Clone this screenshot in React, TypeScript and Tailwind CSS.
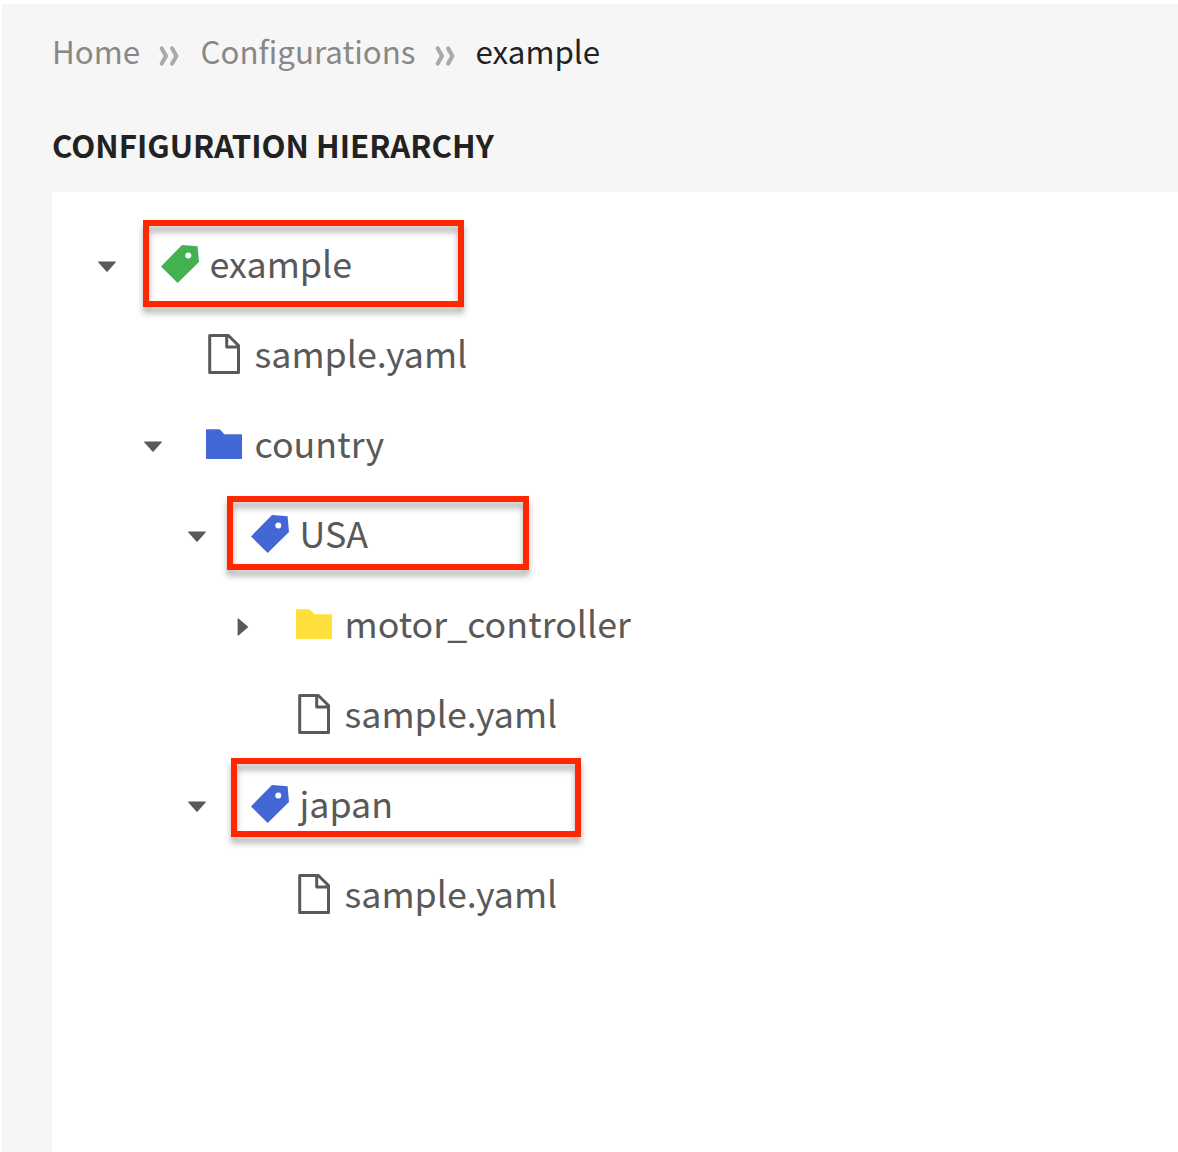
import React from "react";

type Kind = "tag" | "file" | "folder";

interface Node {
  name: string;
  kind: Kind;
  open?: boolean;
  indent: string;
  color: string;
  marker?: string;
}

const nodes: Node[] = [
  { name: "example", kind: "tag", open: true, indent: "pl-[46px]", color: "text-[#43b150]", marker: "left-[91px] top-0 w-[321px] h-[87px]" },
  { name: "sample.yaml", kind: "file", indent: "pl-[91px]", color: "text-[#595959]" },
  { name: "country", kind: "folder", open: true, indent: "pl-[91px]", color: "text-[#4467d6]" },
  { name: "USA", kind: "tag", open: true, indent: "pl-[136px]", color: "text-[#4467d6]", marker: "left-[175px] top-[6px] w-[302px] h-[74px]" },
  { name: "motor_controller", kind: "folder", open: false, indent: "pl-[181px]", color: "text-[#ffdf3b]" },
  { name: "sample.yaml", kind: "file", indent: "pl-[181px]", color: "text-[#595959]" },
  { name: "japan", kind: "tag", open: true, indent: "pl-[136px]", color: "text-[#4467d6]", marker: "left-[179px] top-[-2px] w-[350px] h-[79px]" },
  { name: "sample.yaml", kind: "file", indent: "pl-[181px]", color: "text-[#595959]" },
];

function NodeIcon({ kind }: { kind: Kind }) {
  return (
    <svg width="40" height="44" viewBox="0 0 40 44" className="block">
      {kind === "tag" && (
        <path
          fill="currentColor"
          fillRule="evenodd"
          d="M22 2 L37.6 3.2 L39 19 L17.7 40 L1 23.4 Z M28.3 9.5 a3 3 0 1 0 0 6 a3 3 0 1 0 0 -6 Z"
        />
      )}
      {kind === "folder" && (
        <path fill="currentColor" d="M2 6.2 H13.8 Q14.8 6.2 15.5 7 L19.3 11.2 H36 Q37 11.2 37 12.2 V35 Q37 36 36 36 H2 Q1 36 1 35 V7.2 Q1 6.2 2 6.2 Z" />
      )}
      {kind === "file" && (
        <path fill="none" stroke="currentColor" strokeWidth="3" strokeLinejoin="round" d="M4.7 2.5 H23.4 L33.5 12.5 V39.5 H4.7 Z M21.7 2.5 V14 H33" />
      )}
    </svg>
  );
}

function Arrow({ open, nudge }: { open?: boolean; nudge: boolean }) {
  return (
    <svg width="18" height="18" viewBox={nudge ? "-1 0 18 18" : "0 0 18 18"} className="mt-1 mr-[44px] shrink-0 overflow-visible text-[#595959]">
      {open === true && <path fill="currentColor" d="M0.6 3.6 H17.4 Q18.2 3.8 17.6 4.5 L9.6 13.5 Q9 14 8.4 13.5 L0.4 4.5 Q-0.2 3.8 0.6 3.6 Z" />}
      {open === false && <path fill="currentColor" d="M3.6 0.8 Q3.8 0 4.5 0.5 L13.8 8.5 Q14.4 9 13.8 9.6 L4.5 17.6 Q3.8 18 3.6 17.3 Z" />}
    </svg>
  );
}

function Separator() {
  return (
    <svg width="20" height="20" viewBox="0 0 20 20" className="mt-[9px] shrink-0 text-[#aaaaaa]">
      <path fill="none" stroke="currentColor" strokeWidth="4.1" strokeLinecap="round" strokeLinejoin="round" d="M2.8 2.4 L7 10 L2.8 17.6 M13.2 2.4 L17.4 10 L13.2 17.6" />
    </svg>
  );
}

export default function App() {
  return (
    <div className="h-[1152px] w-full overflow-hidden bg-white pt-1 pl-[2px] font-['Noto_Sans_CJK_SC','Noto_Sans_CJK_JP',sans-serif]">
      <div className="flex h-full flex-col bg-[#f6f6f6] pl-[50px]">
        <nav className="mt-[23px] flex h-[48px] items-center text-[31.3px] leading-[48px] text-[#888888]">
          <a className="w-[107px]">Home</a>
          <Separator />
          <a className="ml-[21.5px] w-[234.5px]">Configurations</a>
          <Separator />
          <span className="ml-[20.5px] text-[#222222]">example</span>
        </nav>
        <h1 className="mt-[46px] h-[48px] text-[31.24px] leading-[48px] font-bold text-[#222222]">CONFIGURATION HIERARCHY</h1>
        <main className="mt-[23px] flex-1 bg-white pt-[28px]">
          {nodes.map((n, i) => (
            <div key={i} className={`relative flex h-[90px] items-center ${n.indent}`}>
              <Arrow open={n.open} nudge={n.kind === "folder"} />
              <span className={`shrink-0 ${n.color}`}>
                <NodeIcon kind={n.kind} />
              </span>
              <span className="mb-[7px] ml-[9.5px] text-[35.8px] leading-[54px] whitespace-nowrap text-[#595959]">{n.name}</span>
              {n.marker && (
                <div className={`absolute border-6 border-[#ff2600] drop-shadow-[0_6px_3px_rgba(0,0,0,0.3)] ${n.marker}`} />
              )}
            </div>
          ))}
        </main>
      </div>
    </div>
  );
}
